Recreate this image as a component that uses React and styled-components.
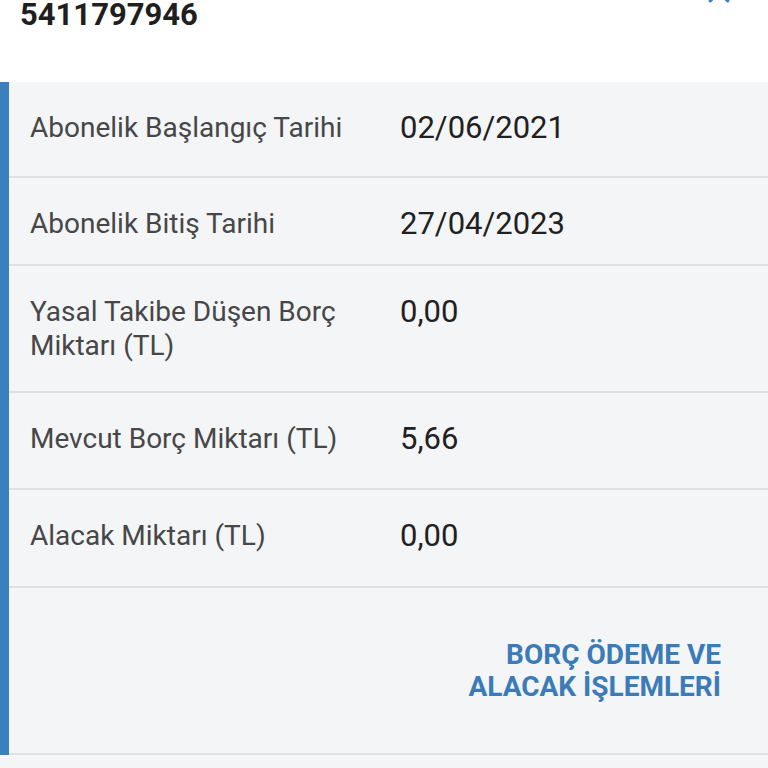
import React from "react";
import styled, { createGlobalStyle } from "styled-components";

const Global = createGlobalStyle`
  html, body { margin: 0; padding: 0; background: #ffffff; }
  body { font-family: Roboto, "Noto Sans", sans-serif; }
`;

const Page = styled.div`
  width: 768px;
  height: 768px;
  overflow: hidden;
  background: #f4f5f7;
  display: flex;
  flex-direction: column;
`;

const Header = styled.div`
  background: #ffffff;
  height: 82px;
  display: flex;
  justify-content: space-between;
  align-items: flex-start;
  padding: 0 20px;
  box-sizing: border-box;
  position: relative;
`;

const Title = styled.div`
  font-size: 31px;
  font-weight: 700;
  color: #1f1f1f;
  line-height: 30px;
`;

const Close = styled.div`
  position: absolute;
  right: 34px;
  top: -23px;
  color: #3d7fbf;
`;

const Card = styled.div`
  display: flex;
  border-left: 9px solid #3c7fbe;
  background: #f4f5f7;
`;

const Rows = styled.div`
  flex: 1;
  display: flex;
  flex-direction: column;
`;

const Row = styled.div`
  display: flex;
  align-items: flex-start;
  padding: ${(p) => p.$pt}px 0 0 21px;
  height: ${(p) => p.$h}px;
  box-sizing: border-box;
  border-bottom: 2px solid #dfe0e3;
`;

const Label = styled.div`
  width: 370px;
  flex: none;
  font-size: 28px;
  line-height: 34px;
  color: #474747;
`;

const Value = styled.div`
  font-size: 31px;
  line-height: 34px;
  color: #212121;
`;

const ActionRow = styled.div`
  display: flex;
  justify-content: flex-end;
  align-items: center;
  height: 167px;
  padding-right: 47px;
  box-sizing: border-box;
  border-bottom: 2px solid #dfe0e3;
`;

const Action = styled.button`
  background: none;
  border: none;
  padding: 0;
  font-family: Roboto, sans-serif;
  font-weight: 700;
  font-size: 28px;
  line-height: 32px;
  color: #3b7bb8;
  text-align: right;
  text-transform: uppercase;
  cursor: pointer;
`;

const rows = [
  { label: "Abonelik Başlangıç Tarihi", value: "02/06/2021", h: 96 },
  { label: "Abonelik Bitiş Tarihi", value: "27/04/2023", h: 88 },
  { label: "Yasal Takibe Düşen Borç Miktarı (TL)", value: "0,00", h: 127 },
  { label: "Mevcut Borç Miktarı (TL)", value: "5,66", h: 97 },
  { label: "Alacak Miktarı (TL)", value: "0,00", h: 98 },
];

export default function App() {
  return (
    <Page>
      <Global />
      <Header>
        <Title>5411797946</Title>
        <Close>
          <svg width="30" height="30" viewBox="0 0 24 24" fill="none" stroke="currentColor" strokeWidth="2.6" strokeLinecap="round">
            <path d="M5 5l14 14M19 5L5 19" />
          </svg>
        </Close>
      </Header>
      <Card>
        <Rows>
          {rows.map((r) => (
            <Row key={r.label} $h={r.h} $pt={29}>
              <Label>{r.label}</Label>
              <Value>{r.value}</Value>
            </Row>
          ))}
          <ActionRow>
            <Action>
              BORÇ ÖDEME VE
              <br />
              ALACAK İŞLEMLERİ
            </Action>
          </ActionRow>
        </Rows>
      </Card>
    </Page>
  );
}
